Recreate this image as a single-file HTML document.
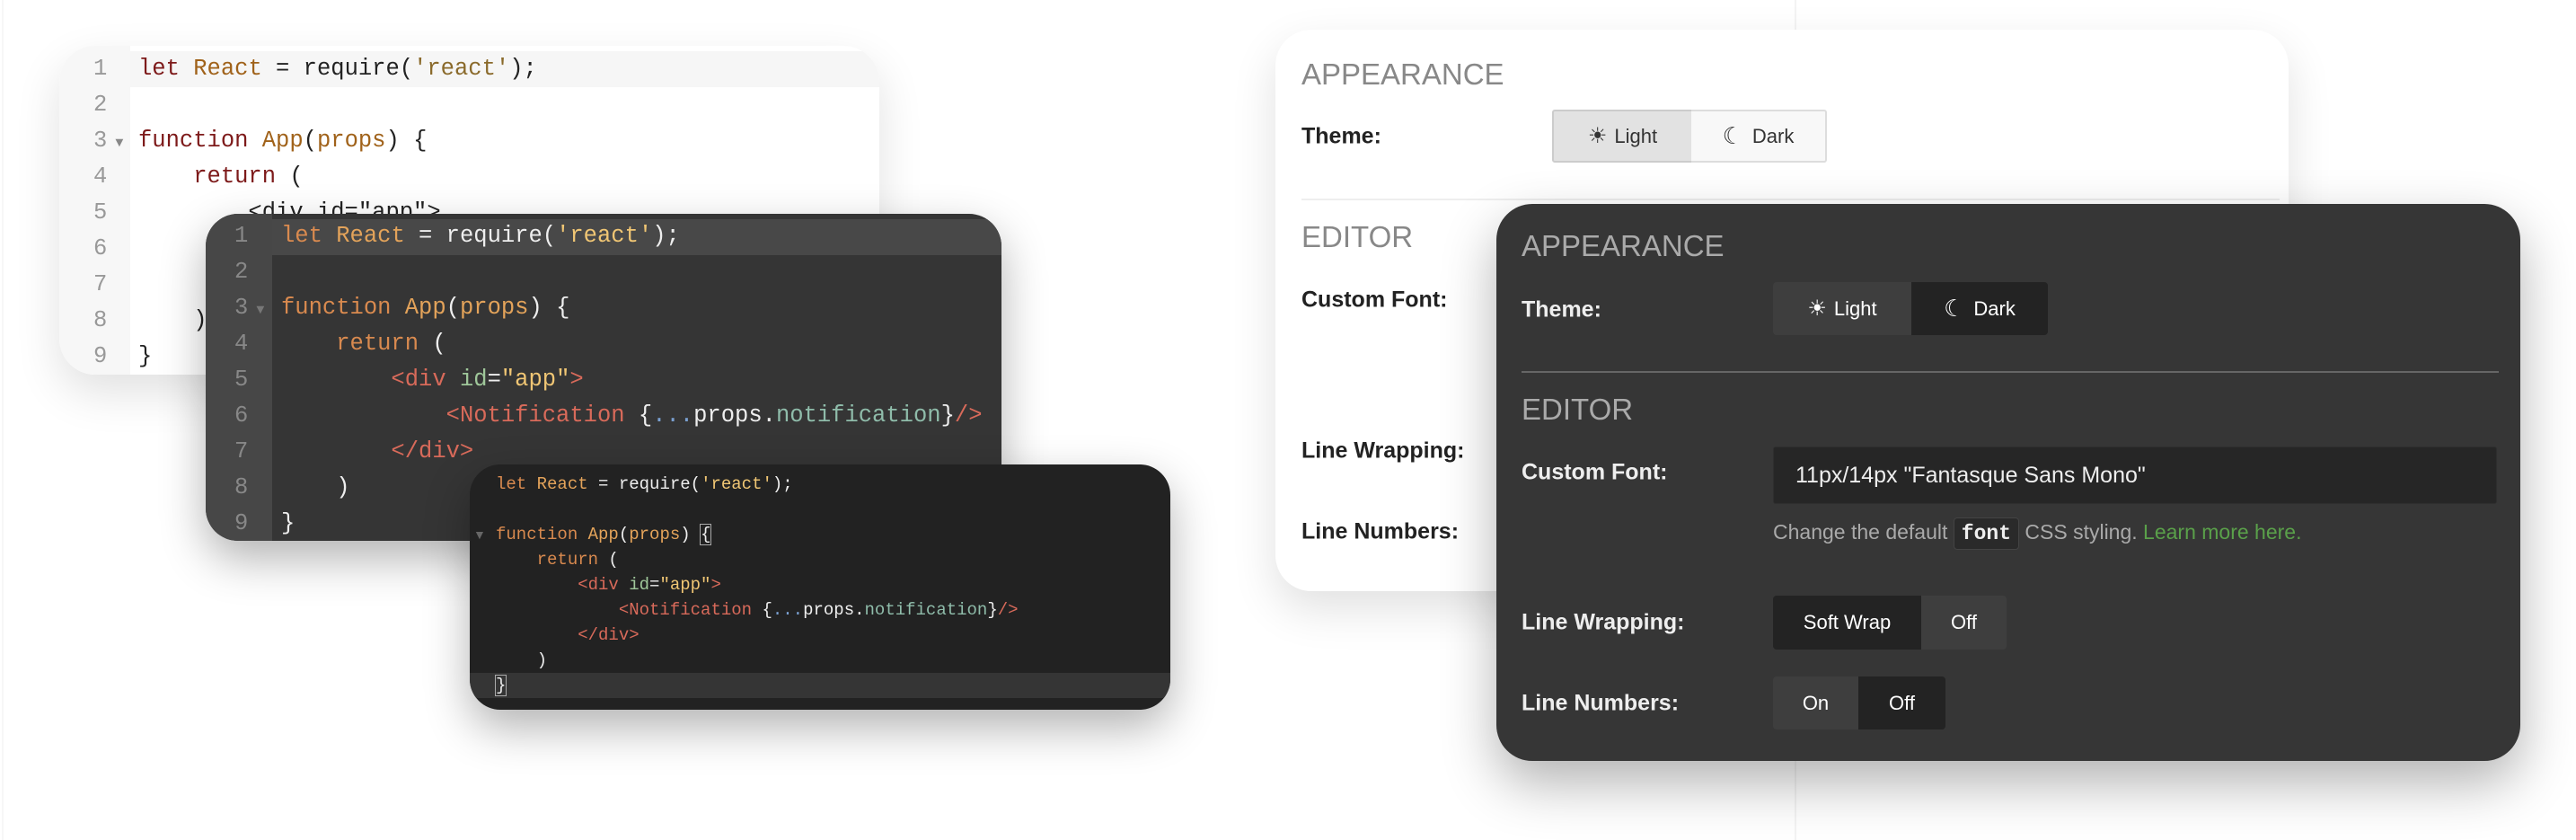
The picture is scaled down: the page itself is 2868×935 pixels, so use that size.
<!DOCTYPE html>
<html><head><meta charset="utf-8"><style>
*{margin:0;padding:0;box-sizing:border-box}
body{width:2868px;height:935px;background:#fff;position:relative;overflow:hidden;font-family:"Liberation Sans",sans-serif}
.abs{position:absolute}
.code{position:absolute;font-family:"Liberation Mono",monospace;white-space:pre}
.code div{height:40px;line-height:40px}
.btn{position:absolute;display:flex;align-items:center;justify-content:center;font-size:22px}
.lbl{position:absolute;font-weight:bold;font-size:25px;transform:translateY(-50%)}
.hd{position:absolute;font-size:33px;transform:translateY(-50%);letter-spacing:0}
</style></head><body>
<div class="abs" style="left:1998px;top:0;width:2px;height:935px;background:#f3f3f3"></div>
<div class="abs" style="left:2px;top:0;width:2px;height:935px;background:#f7f7f7"></div>

<!-- light editor card -->
<div class="abs" style="left:66px;top:51px;width:913px;height:366px;background:#fff;border-radius:40px;overflow:hidden;box-shadow:0 20px 50px rgba(0,0,0,0.12)">
  <div class="abs" style="left:0;top:0;width:79px;height:366px;background:#f7f7f7"></div>
  <div class="abs" style="left:79px;top:6px;width:834px;height:40px;background:#f6f6f6"></div>
  <div class="code" style="left:38px;top:6px;font-size:25.5px;color:#999"><div>1</div><div>2</div><div>3<span style="font-size:15px;color:#888"> ▼</span></div><div>4</div><div>5</div><div>6</div><div>7</div><div>8</div><div>9</div></div>
  <div class="code" style="left:88px;top:6px;font-size:25.5px;color:#222"><div><span style="color:#7d1a1a">let</span> <span style="color:#a0621a">React</span> = require(<span style="color:#8a6a2b">'react'</span>);</div><div> </div><div><span style="color:#7d1a1a">function</span> <span style="color:#a0621a">App</span>(<span style="color:#a0621a">props</span>) {</div><div>    <span style="color:#7d1a1a">return</span> (</div><div>        &lt;div id="app"&gt;</div><div> </div><div> </div><div>    )</div><div>}</div></div>
</div>

<!-- dark editor card -->
<div class="abs" style="left:229px;top:238px;width:886px;height:364px;background:#353535;border-radius:36px;overflow:hidden;box-shadow:0 20px 50px rgba(0,0,0,0.3)">
  <div class="abs" style="left:0;top:0;width:74px;height:364px;background:#474747"></div>
  <div class="abs" style="left:74px;top:6px;width:812px;height:40px;background:#484848"></div>
  <div class="code" style="left:32px;top:5px;font-size:25.5px;color:#888"><div>1</div><div>2</div><div>3<span style="font-size:15px;color:#777"> ▼</span></div><div>4</div><div>5</div><div>6</div><div>7</div><div>8</div><div>9</div></div>
  <div class="code" style="left:84px;top:5px;font-size:25.5px;color:#eee"><div><span style="color:#d98a4f">let</span> <span style="color:#e3a35a">React</span> = require(<span style="color:#f0c674">'react'</span>);</div><div> </div><div><span style="color:#d98a4f">function</span> <span style="color:#e3a35a">App</span>(<span style="color:#e3a35a">props</span>) {</div><div>    <span style="color:#d98a4f">return</span> (</div><div>        <span style="color:#d86a5a">&lt;div</span> <span style="color:#9fc79a">id</span>=<span style="color:#f0c674">"app"</span><span style="color:#d86a5a">&gt;</span></div><div>            <span style="color:#d86a5a">&lt;Notification</span> {<span style="color:#7aa0d0">...</span>props.<span style="color:#8fbcaa">notification</span>}<span style="color:#d86a5a">/&gt;</span></div><div>        <span style="color:#d86a5a">&lt;/div&gt;</span></div><div>    )</div><div>}</div></div>
</div>

<!-- black editor card -->
<div class="abs" style="left:523px;top:517px;width:780px;height:273px;background:#222;border-radius:34px;overflow:hidden;box-shadow:0 20px 50px rgba(0,0,0,0.3)">
  <div class="abs" style="left:0;top:232px;width:780px;height:28px;background:#353535"></div>
  <div class="abs" style="left:4px;top:70px;font-size:14px;color:#666">▼</div>
  <div class="code" style="left:29px;top:8px;font-size:19px;color:#eee"><div style="height:28px;line-height:28px"><span style="color:#d98a4f">let</span> <span style="color:#e3a35a">React</span> = require(<span style="color:#f0c674">'react'</span>);</div><div style="height:28px;line-height:28px"> </div><div style="height:28px;line-height:28px"><span style="color:#d98a4f">function</span> <span style="color:#e3a35a">App</span>(<span style="color:#e3a35a">props</span>) <span style="outline:1px solid #aaa">{</span></div><div style="height:28px;line-height:28px">    <span style="color:#d98a4f">return</span> (</div><div style="height:28px;line-height:28px">        <span style="color:#d86a5a">&lt;div</span> <span style="color:#9fc79a">id</span>=<span style="color:#f0c674">"app"</span><span style="color:#d86a5a">&gt;</span></div><div style="height:28px;line-height:28px">            <span style="color:#d86a5a">&lt;Notification</span> {<span style="color:#7aa0d0">...</span>props.<span style="color:#8fbcaa">notification</span>}<span style="color:#d86a5a">/&gt;</span></div><div style="height:28px;line-height:28px">        <span style="color:#d86a5a">&lt;/div&gt;</span></div><div style="height:28px;line-height:28px">    )</div><div style="height:28px;line-height:28px"><span style="outline:1px solid #aaa">}</span></div></div>
</div>

<!-- light settings card -->
<div class="abs" style="left:1420px;top:33px;width:1128px;height:625px;background:#fff;border-radius:40px;box-shadow:0 20px 50px rgba(0,0,0,0.12)"></div>
<div class="hd" style="left:1449px;top:83px;color:#888">APPEARANCE</div>
<div class="lbl" style="left:1449px;top:152px;color:#222">Theme:</div>
<div class="btn" style="left:1728px;top:122px;width:156px;height:59px;background:#e2e2e2;border:2px solid #ccc;border-right:1px solid #ccc;border-radius:3px 0 0 3px;color:#333"><span style="font-size:24px;margin-right:8px">☀</span>Light</div>
<div class="btn" style="left:1883px;top:122px;width:151px;height:59px;background:#f8f8f8;border:2px solid #ddd;border-left:none;border-radius:0 3px 3px 0;color:#333"><span style="font-size:26px;margin-right:10px">☾</span>Dark</div>
<div class="abs" style="left:1449px;top:221px;width:1089px;height:2px;background:#eee"></div>
<div class="hd" style="left:1449px;top:264px;color:#888">EDITOR</div>
<div class="lbl" style="left:1449px;top:334px;color:#222">Custom Font:</div>
<div class="lbl" style="left:1449px;top:502px;color:#222">Line Wrapping:</div>
<div class="lbl" style="left:1449px;top:592px;color:#222">Line Numbers:</div>

<!-- dark settings card -->
<div class="abs" style="left:1666px;top:227px;width:1140px;height:620px;background:#363636;border-radius:40px;box-shadow:0 25px 60px rgba(0,0,0,0.3)"></div>
<div class="hd" style="left:1694px;top:274px;color:#aaa">APPEARANCE</div>
<div class="lbl" style="left:1694px;top:345px;color:#eee">Theme:</div>
<div class="btn" style="left:1974px;top:314px;width:154px;height:59px;background:#3e3e3e;border-radius:4px 0 0 4px;color:#fff"><span style="font-size:24px;margin-right:8px">☀</span>Light</div>
<div class="btn" style="left:2128px;top:314px;width:152px;height:59px;background:#232323;border-radius:0 4px 4px 0;color:#fff"><span style="font-size:26px;margin-right:10px">☾</span>Dark</div>
<div class="abs" style="left:1694px;top:413px;width:1088px;height:2px;background:#666"></div>
<div class="hd" style="left:1694px;top:456px;color:#aaa">EDITOR</div>
<div class="lbl" style="left:1694px;top:526px;color:#eee">Custom Font:</div>
<div class="abs" style="left:1974px;top:497px;width:806px;height:64px;background:#262626;border:1px solid #2e2e2e;border-radius:3px;color:#eee;font-size:25px;line-height:62px;padding-left:24px">11px/14px "Fantasque Sans Mono"</div>
<div class="abs" style="left:1974px;top:594px;transform:translateY(-50%);font-size:23px;color:#aaa;white-space:nowrap">Change the default <span style="display:inline-block;background:#2a2a2a;border:1px solid #444;border-radius:4px;padding:4px 8px;font-family:'Liberation Mono',monospace;color:#eee;font-weight:bold">font</span> CSS styling. <span style="color:#5aa04a">Learn more here.</span></div>
<div class="lbl" style="left:1694px;top:693px;color:#eee">Line Wrapping:</div>
<div class="btn" style="left:1974px;top:663px;width:165px;height:60px;background:#232323;color:#fff;border-radius:4px 0 0 4px">Soft Wrap</div>
<div class="btn" style="left:2139px;top:663px;width:95px;height:60px;background:#3e3e3e;color:#fff;border-radius:0 4px 4px 0">Off</div>
<div class="lbl" style="left:1694px;top:783px;color:#eee">Line Numbers:</div>
<div class="btn" style="left:1974px;top:753px;width:95px;height:59px;background:#3e3e3e;color:#fff;border-radius:4px 0 0 4px">On</div>
<div class="btn" style="left:2069px;top:753px;width:97px;height:59px;background:#232323;color:#fff;border-radius:0 4px 4px 0">Off</div>
</body></html>
